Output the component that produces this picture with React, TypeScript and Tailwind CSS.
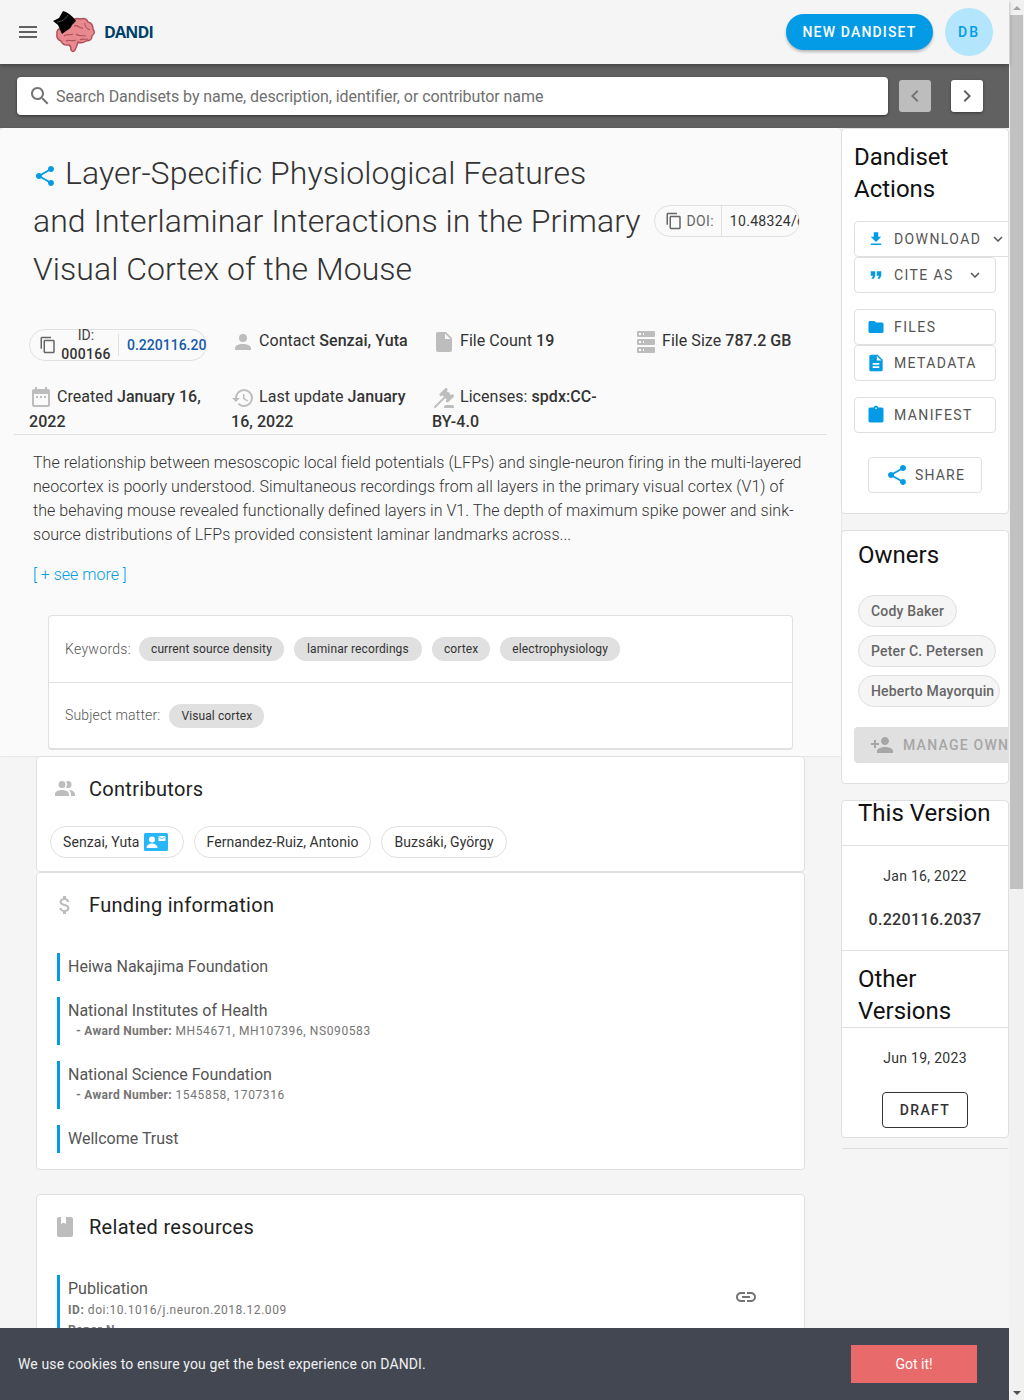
import React from "react";

const P = {
  menu: "M3 18h18v-2H3v2zm0-5h18v-2H3v2zm0-7v2h18V6H3z",
  search: "M15.5 14h-.79l-.28-.27C15.41 12.59 16 11.11 16 9.5 16 5.91 13.09 3 9.5 3S3 5.91 3 9.5 5.91 16 9.5 16c1.61 0 3.09-.59 4.23-1.57l.27.28v.79l5 4.99L20.49 19l-4.99-5zm-6 0C7.01 14 5 11.99 5 9.5S7.01 5 9.5 5 14 7.01 14 9.5 11.99 14 9.5 14z",
  left: "M15.41 7.41 14 6l-6 6 6 6 1.41-1.41L10.83 12z",
  right: "M10 6 8.59 7.41 13.17 12l-4.58 4.59L10 18l6-6z",
  share: "M18 16.08c-.76 0-1.44.3-1.96.77L8.91 12.7c.05-.23.09-.46.09-.7s-.04-.47-.09-.7l7.05-4.11c.54.5 1.25.81 2.04.81 1.66 0 3-1.34 3-3s-1.34-3-3-3-3 1.34-3 3c0 .24.04.47.09.7L8.04 9.81C7.5 9.31 6.79 9 6 9c-1.66 0-3 1.34-3 3s1.34 3 3 3c.79 0 1.5-.31 2.04-.81l7.12 4.16c-.05.21-.08.43-.08.65 0 1.61 1.31 2.92 2.92 2.92s2.92-1.31 2.92-2.92-1.31-2.92-2.92-2.92z",
  copy: "M16 1H4c-1.1 0-2 .9-2 2v14h2V3h12V1zm3 4H8c-1.1 0-2 .9-2 2v14c0 1.1.9 2 2 2h11c1.1 0 2-.9 2-2V7c0-1.1-.9-2-2-2zm0 16H8V7h11v14z",
  person: "M12,4A4,4 0 0,1 16,8A4,4 0 0,1 12,12A4,4 0 0,1 8,8A4,4 0 0,1 12,4M12,14C16.42,14 20,15.79 20,18V20H4V18C4,15.79 7.58,14 12,14Z",
  file: "M13,9V3.5L18.5,9M6,2C4.89,2 4,2.89 4,4V20A2,2 0 0,0 6,22H18A2,2 0 0,0 20,20V8L14,2H6Z",
  server: "M4,1H20A1,1 0 0,1 21,2V6A1,1 0 0,1 20,7H4A1,1 0 0,1 3,6V2A1,1 0 0,1 4,1M4,9H20A1,1 0 0,1 21,10V14A1,1 0 0,1 20,15H4A1,1 0 0,1 3,14V10A1,1 0 0,1 4,9M4,17H20A1,1 0 0,1 21,18V22A1,1 0 0,1 20,23H4A1,1 0 0,1 3,22V18A1,1 0 0,1 4,17M9,5H10V3H9V5M9,13H10V11H9V13M9,21H10V19H9V21M5,3V5H7V3H5M5,11V13H7V11H5M5,19V21H7V19H5Z",
  calendar: "M9,10H7V12H9V10M13,10H11V12H13V10M17,10H15V12H17V10M19,3H18V1H16V3H8V1H6V3H5C3.89,3 3,3.9 3,5V19A2,2 0 0,0 5,21H19A2,2 0 0,0 21,19V5A2,2 0 0,0 19,3M19,19H5V8H19V19Z",
  history: "M13.5,8H12V13L16.28,15.54L17,14.33L13.5,12.25V8M13,3A9,9 0 0,0 4,12H1L4.96,16.03L9,12H6A7,7 0 0,1 13,5A7,7 0 0,1 20,12A7,7 0 0,1 13,19C11.07,19 9.32,18.21 8.06,16.94L6.64,18.36C8.27,20 10.5,21 13,21A9,9 0 0,0 22,12A9,9 0 0,0 13,3",
  gavel: "M2.3,20.28L11.9,10.68L10.5,9.26L9.78,9.97C9.39,10.36 8.76,10.36 8.37,9.97L7.66,9.26C7.27,8.87 7.27,8.24 7.66,7.85L13.32,2.19C13.71,1.8 14.34,1.8 14.73,2.19L15.44,2.9C15.83,3.29 15.83,3.92 15.44,4.31L14.73,5L16.15,6.43C16.54,6.04 17.17,6.04 17.56,6.43C17.95,6.82 17.95,7.46 17.56,7.85L18.97,9.26L19.68,8.55C20.07,8.16 20.71,8.16 21.1,8.55L21.8,9.26C22.19,9.65 22.19,10.29 21.8,10.68L16.15,16.33C15.76,16.72 15.12,16.72 14.73,16.33L14.03,15.63C13.63,15.24 13.63,14.6 14.03,14.21L14.73,13.5L13.32,12.09L3.71,21.7C3.32,22.09 2.69,22.09 2.3,21.7C1.91,21.31 1.91,20.67 2.3,20.28M20,19A2,2 0 0,1 22,21V22H12V21A2,2 0 0,1 14,19H20Z",
  download: "M19 9h-4V3H9v6H5l7 7 7-7zM5 18v2h14v-2H5z",
  down: "M7.41 8.59 12 13.17l4.59-4.58L18 10l-6 6-6-6 1.41-1.41z",
  quote: "M6 17h3l2-4V7H5v6h3zm8 0h3l2-4V7h-6v6h3z",
  folder: "M10 4H4c-1.1 0-1.99.9-1.99 2L2 18c0 1.1.9 2 2 2h16c1.1 0 2-.9 2-2V8c0-1.1-.9-2-2-2h-8l-2-2z",
  description: "M14 2H6c-1.1 0-1.99.9-1.99 2L4 20c0 1.1.89 2 1.99 2H18c1.1 0 2-.9 2-2V8l-6-6zm2 16H8v-2h8v2zm0-4H8v-2h8v2zm-3-5V3.5L18.5 9H13z",
  clipboard: "M19 3h-4.18C14.4 1.84 13.3 1 12 1s-2.4.84-2.82 2H5c-1.1 0-2 .9-2 2v14c0 1.1.9 2 2 2h14c1.1 0 2-.9 2-2V5c0-1.1-.9-2-2-2zm-7 0c.55 0 1 .45 1 1s-.45 1-1 1-1-.45-1-1 .45-1 1-1z",
  personAdd: "M15 12c2.21 0 4-1.79 4-4s-1.79-4-4-4-4 1.79-4 4 1.79 4 4 4zm-9-2V7H4v3H1v2h3v3h2v-3h3v-2H6zm9 4c-2.67 0-8 1.34-8 4v2h16v-2c0-2.66-5.33-4-8-4z",
  group: "M16 17V19H2V17S2 13 9 13 16 17 16 17M12.5 7.5A3.5 3.5 0 1 0 9 11A3.5 3.5 0 0 0 12.5 7.5M15.94 13A5.32 5.32 0 0 1 18 17V19H22V17S22 13.37 15.94 13M15 4A3.39 3.39 0 0 0 13.07 4.59A5 5 0 0 1 13.07 10.41A3.39 3.39 0 0 0 15 11A3.5 3.5 0 0 0 15 4Z",
  money: "M11.8 10.9c-2.27-.59-3-1.2-3-2.15 0-1.09 1.01-1.85 2.7-1.85 1.78 0 2.44.85 2.5 2.1h2.21c-.07-1.72-1.12-3.3-3.21-3.81V3h-3v2.16c-1.94.42-3.5 1.68-3.5 3.61 0 2.31 1.91 3.46 4.7 4.13 2.5.6 3 1.48 3 2.41 0 .69-.49 1.79-2.7 1.79-2.06 0-2.87-.92-2.98-2.1h-2.2c.12 2.19 1.76 3.42 3.68 3.83V21h3v-2.15c1.95-.37 3.5-1.5 3.5-3.55 0-2.84-2.43-3.81-4.7-4.4z",
  book: "M18 2h-5v7l-2.5-1.5L8 9V2H6c-1.1 0-2 .9-2 2v16c0 1.1.9 2 2 2h12c1.1 0 2-.9 2-2V4c0-1.1-.9-2-2-2z",
  link: "M3.9 12c0-1.71 1.39-3.1 3.1-3.1h4V7H7c-2.76 0-5 2.24-5 5s2.24 5 5 5h4v-1.9H7c-1.71 0-3.1-1.39-3.1-3.1zM8 13h8v-2H8v2zm9-6h-4v1.9h4c1.71 0 3.1 1.39 3.1 3.1s-1.39 3.1-3.1 3.1h-4V17h4c2.76 0 5-2.24 5-5s-2.24-5-5-5z",
};

function Icon({ d, className }: { d: string; className: string }) {
  return (
    <svg viewBox="0 0 24 24" className={className} fill="currentColor">
      <path d={d} />
    </svg>
  );
}

function Logo() {
  return (
    <svg viewBox="0 0 44 44" className="w-[44px] h-[44px] shrink-0">
      <path d="M10 18 q2-7 9-6 q4-5 9-3 q6-2 8 3 q5 1 5 7 q3 4-1 7 q0 5-6 5 q-4 3-8 1 q-1 4-3 8 q-2 3-4 0 q0-4-2-5 q-6 1-8-4 q-5-2-4-7 q-1-5 5-6z" fill="#e8898f" stroke="#ae4f5a" strokeWidth="1.4" />
      <path d="M12 26 C15 23 18 26 21 24 M22 16 C26 14 27 19 31 18 M24 24 C27 27 31 25 34 26 M33 13 C32 17 36 19 38 20 M14 31 C17 29 20 32 24 30 M28 30 C30 28 34 30 36 29" fill="none" stroke="#ae4f5a" strokeWidth="1.1" />
      <path d="M1 11 L7 8 L11 1 C15 2 21 6 24 11 L20 15 C19 18 17 19 14 21 L10 24 C8 20 7 17 6 15 Z" fill="#000" />
      <path d="M5 12 C9 12 14 9 16 5" fill="none" stroke="#666" strokeWidth="0.8" />
    </svg>
  );
}

function ActionBtn({ icon, label, chevron, w = "w-[142px]", iconCls = "w-5 h-5" }: { icon: string; label: string; chevron?: string; w?: string; iconCls?: string }) {
  return (
    <div className={`${w} h-[36px] shrink-0 flex items-center border border-[#e0e0e0] rounded-[4px] pl-[11px] text-[14px] tracking-[1.4px] text-[#555]`}>
      <span className="w-[20px] flex justify-center text-[#039be5]"><Icon d={icon} className={iconCls} /></span>
      <span className="ml-[8px] whitespace-nowrap">{label}</span>
      {chevron ? <span className={chevron}><Icon d={P.down} className="w-[18px] h-[18px] text-[#555]" /></span> : null}
    </div>
  );
}

function OwnerChip({ name, w = "w-fit" }: { name: string; w?: string }) {
  return (
    <div className={`h-[32px] ${w} flex items-center rounded-full border border-[#e0e0e0] bg-[#f5f5f5] px-[12px] text-[14px] font-medium tracking-[0.18px] text-[#666] whitespace-nowrap`}>{name}</div>
  );
}

function Tag({ label, w = "" }: { label: string; w?: string }) {
  return (
    <span className={`h-[24px] ${w} flex items-center justify-center rounded-full bg-[#e0e0e0] px-[12px] text-[12px] tracking-[0.11px] text-[#333] whitespace-nowrap`}>{label}</span>
  );
}

function SectionTitle({ icon, label }: { icon: string; label: string }) {
  return (
    <div className="flex items-center h-[32px]">
      <span className="w-[24px] flex justify-center text-[#bdbdbd] ml-[16px]"><Icon d={icon} className="w-6 h-6" /></span>
      <span className="ml-[12px] text-[20px] tracking-[0.3px] text-[#222]">{label}</span>
    </div>
  );
}

function Fund({ name, award }: { name: string; award?: string }) {
  return (
    <div className="ml-[20px] border-l-[3px] border-[#039be5] pl-[8px] mb-[16px]">
      <div className="text-[16px] leading-[28px] text-[#555]">{name}</div>
      {award ? (
        <div className="-mt-[2px] text-[12px] leading-[16px] pb-[6px] pl-[8px] tracking-[0.6px] text-[#757575]">
          <span className="font-bold tracking-[0.3px]">- Award Number:</span> {award}
        </div>
      ) : null}
    </div>
  );
}

function Meta({ icon, children, pr = "pr-[4px]", pt = "" }: { icon: string; children: React.ReactNode; pr?: string; pt?: string }) {
  return (
    <div className={`text-[16px] leading-[24px] tracking-[0.05px] text-[#333] ${pr} ${pt}`}>
      <Icon d={icon} className="inline-block w-6 h-6 text-[#bdbdbd] align-middle mr-[4px]" />
      {children}
    </div>
  );
}

export default function App() {
  return (
    <div className="relative w-[1024px] h-[1400px] overflow-hidden flex bg-[#f5f5f5] [font-family:Roboto,sans-serif]">
      <div className="w-[1009px] shrink-0 flex flex-col">
        <header className="h-[64px] shrink-0 bg-[#f5f5f5] flex items-center pl-[16px] pr-[16px] z-10 shadow-[0_2px_4px_rgba(0,0,0,0.3)]">
          <Icon d={P.menu} className="w-6 h-6 text-[#616161]" />
          <span className="ml-[12px]"><Logo /></span>
          <span className="ml-[8px] text-[16px] font-bold tracking-[-0.8px] text-[#003f6b] [font-family:'Open_Sans',sans-serif]">DANDI</span>
          <div className="ml-auto h-[36px] w-[147px] rounded-full bg-[#039be5] text-white text-[14px] font-medium tracking-[1.17px] flex items-center justify-center shadow-[0_2px_3px_rgba(0,0,0,0.25)]">NEW DANDISET</div>
          <div className="ml-[12px] w-[48px] h-[48px] rounded-full bg-[#b3e5fc] text-[#039be5] text-[14px] font-medium tracking-[2px] flex items-center justify-center">DB</div>
        </header>

        <div className="h-[64px] shrink-0 bg-[#616161] flex items-center pl-[17px]">
          <div className="w-[871px] h-[38px] bg-white rounded-[4px] flex items-center pl-[11px] shadow-[0_1px_3px_rgba(0,0,0,0.5)]">
            <Icon d={P.search} className="w-6 h-6 text-[#757575]" />
            <span className="ml-[4px] pt-[1px] text-[16px] tracking-[-0.07px] text-[#6f6f6f]">Search Dandisets by name, description, identifier, or contributor name</span>
          </div>
          <div className="ml-[11px] w-[32px] h-[32px] rounded-[3px] bg-[#bdbdbd] flex items-center justify-center"><Icon d={P.left} className="w-6 h-6 text-[#757575]" /></div>
          <div className="ml-[20px] w-[32px] h-[32px] rounded-[3px] bg-white flex items-center justify-center shadow-[0_1px_3px_rgba(0,0,0,0.4)]"><Icon d={P.right} className="w-6 h-6 text-[#616161]" /></div>
        </div>

        <div className="flex-1 flex min-h-0">
          <div className="w-[841px] shrink-0 flex flex-col">
            <section className="h-[628px] shrink-0 bg-[#fafafa] rounded-t-[4px] pt-[21px] shadow-[0_0_2px_rgba(0,0,0,0.2)]">
              <h1 className="pl-[33px] w-[800px] text-[32px] leading-[48px] font-light tracking-[0.05px] text-[#333] whitespace-nowrap">
                <Icon d={P.share} className="inline-block w-6 h-6 text-[#039be5] align-middle mr-[8px]" />
                Layer-Specific Physiological Features<br />
                and Interlaminar Interactions in the Primary
                <span className="inline-flex align-[2px] ml-[13px] w-[146px] h-[32px] rounded-full border border-[#e0e0e0] overflow-hidden items-center text-[14px] font-normal tracking-normal leading-none">
                  <Icon d={P.copy} className="w-[18px] h-[18px] ml-[10px] text-[#666] shrink-0" />
                  <span className="ml-[4px] text-[#666] tracking-[0.3px]">DOI:</span>
                  <span className="ml-[7px] h-full border-l border-[#e0e0e0] pl-[8px] flex items-center whitespace-nowrap text-[#333] tracking-[0.3px]">10.48324/dandi.000166/0.220116.2037</span>
                </span>
                <br />Visual Cortex of the Mouse
              </h1>

              <div className="mx-[14px] mt-[35px] pl-[15px] h-[107px] border-b border-[#e0e0e0] grid grid-cols-[202px_201px_202px_1fr] grid-rows-[57px_49px]">
                <div className="pt-[1px]">
                  <div className="w-[178px] h-[32px] rounded-full border border-[#e0e0e0] flex items-center text-[14px]">
                    <Icon d={P.copy} className="w-[18px] h-[18px] ml-[9px] text-[#666] shrink-0" />
                    <span className="w-[58px] text-center leading-[19px] text-[#444] shrink-0">ID:<br /><b className="font-medium text-[#333] tracking-[0.3px]">000166</b></span>
                    <span className="ml-[3px] w-[89px] h-[22px] overflow-hidden flex items-center border-l border-[#e0e0e0] pl-[8px] font-medium text-[#1559a8] whitespace-nowrap">0.220116.2037</span>
                  </div>
                </div>
                <Meta icon={P.person} pt="pt-[1px]">Contact <b className="font-medium">Senzai, Yuta</b></Meta>
                <Meta icon={P.file} pt="pt-[1px]">File Count <b className="font-medium">19</b></Meta>
                <Meta icon={P.server} pt="pt-[1px]">File Size <b className="font-medium">787.2 GB</b></Meta>
                <Meta icon={P.calendar}>Created <b className="font-medium">January 16, 2022</b></Meta>
                <Meta icon={P.history}>Last update <b className="font-medium">January 16, 2022</b></Meta>
                <Meta icon={P.gavel} pr="pr-[20px]">Licenses: <b className="font-medium">spdx:CC-BY-4.0</b></Meta>
              </div>

              <p className="ml-[33px] mt-[16px] w-[775px] text-[16px] leading-[24px] tracking-[0.05px] font-light text-[#333]">
                The relationship between mesoscopic local field potentials (LFPs) and single-neuron firing in the multi-layered neocortex is poorly understood. Simultaneous recordings from all layers in the primary visual cortex (V1) of the behaving mouse revealed functionally defined layers in V1. The depth of maximum spike power and sink-source distributions of LFPs provided consistent laminar landmarks across...
              </p>
              <div className="ml-[33px] mt-[16px] text-[16px] leading-[24px] font-light text-[#039be5]">[ + see more ]</div>

              <div className="ml-[48px] mt-[28px] w-[745px] h-[135px] bg-white rounded-[4px] border border-[#e0e0e0] border-b-2 flex flex-col">
                <div className="h-[67px] shrink-0 border-b border-[#e0e0e0] flex items-center pl-[16px]">
                  <span className="text-[14px] font-light tracking-[0.3px] text-[#555] mr-[8px]">Keywords:</span>
                  <div className="flex gap-[10px]">
                    <Tag label="current source density" />
                    <Tag label="laminar recordings" w="w-[128px]" />
                    <Tag label="cortex" />
                    <Tag label="electrophysiology" />
                  </div>
                </div>
                <div className="flex-1 flex items-center pl-[16px]">
                  <span className="text-[14px] font-light tracking-[0.15px] text-[#555] mr-[9px]">Subject matter:</span>
                  <Tag label="Visual cortex" />
                </div>
              </div>
            </section>

            <section className="ml-[36px] w-[769px] h-[116px] shrink-0 bg-white border border-[#e0e0e0] rounded-[4px] pt-[16px]">
              <SectionTitle icon={P.group} label="Contributors" />
              <div className="flex gap-[10px] ml-[13px] mt-[21px] text-[14px] text-[#333]">
                <span className="h-[32px] flex items-center rounded-full border border-[#e0e0e0] pl-[12px] pr-[15px] tracking-[0.07px]">
                  Senzai, Yuta
                  <svg viewBox="0 0 24 18" className="ml-[4px] w-[24px] h-[18px]">
                    <rect width="24" height="18" rx="1.5" fill="#29b6f6" />
                    <circle cx="8" cy="6.5" r="3" fill="#fff" />
                    <path d="M2.5 15c0-3 3-4.5 5.5-4.5s5.5 1.5 5.5 4.5z" fill="#fff" />
                    <rect x="14.5" y="3" width="7" height="5" fill="#fff" />
                    <path d="M14.5 3.5l3.5 2.5 3.5-2.5" fill="none" stroke="#29b6f6" strokeWidth="0.8" />
                  </svg>
                </span>
                <span className="h-[32px] flex items-center rounded-full border border-[#e0e0e0] px-[12px] tracking-[0.07px]">Fernandez-Ruiz, Antonio</span>
                <span className="h-[32px] flex items-center rounded-full border border-[#e0e0e0] px-[12px] tracking-[0.07px]">Buzsáki, György</span>
              </div>
            </section>

            <section className="ml-[36px] w-[769px] h-[298px] shrink-0 bg-white border border-[#e0e0e0] rounded-[4px] pt-[16px]">
              <SectionTitle icon={P.money} label="Funding information" />
              <div className="mt-[32px]">
                <Fund name="Heiwa Nakajima Foundation" />
                <Fund name="National Institutes of Health" award="MH54671, MH107396, NS090583" />
                <Fund name="National Science Foundation" award="1545858, 1707316" />
                <Fund name="Wellcome Trust" />
              </div>
            </section>

            <section className="ml-[36px] mt-[24px] w-[769px] flex-1 bg-white border border-[#e0e0e0] rounded-[4px] pt-[16px]">
              <SectionTitle icon={P.book} label="Related resources" />
              <div className="mt-[32px] mr-[46px] flex items-start justify-between">
                <div className="ml-[20px] border-l-[3px] border-[#039be5] pl-[8px] w-[500px]">
                  <div className="text-[16px] leading-[28px] text-[#555]">Publication</div>
                  <div className="-mt-[1px] text-[12px] leading-[16px] tracking-[0.55px] text-[#757575]"><b className="font-bold">ID:</b> doi:10.1016/j.neuron.2018.12.009</div>
                  <div className="text-[12px] leading-[24px] tracking-[0.55px] text-[#757575]"><b className="font-bold">Paper N</b></div>
                </div>
                <Icon d={P.link} className="w-6 h-6 mt-[10px] text-[#757575]" />
              </div>
            </section>
          </div>

          <aside className="w-[168px] shrink-0 flex flex-col">
            <section className="h-[386px] shrink-0 bg-white border border-[#e0e0e0] rounded-[4px] overflow-hidden pl-[12px] pt-[12px]">
              <h2 className="text-[24px] leading-[32px] text-[#111] w-[130px]">Dandiset Actions</h2>
              <div className="mt-[16px] flex flex-col">
                <ActionBtn icon={P.download} label="DOWNLOAD" chevron="ml-[8px]" w="w-[160px]" iconCls="w-[18px] h-[18px]" />
                <ActionBtn icon={P.quote} label="CITE AS" chevron="ml-[12px]" iconCls="w-[18px] h-[18px]" />
                <div className="h-[16px]" />
                <ActionBtn icon={P.folder} label="FILES" iconCls="w-[18px] h-[18px]" />
                <ActionBtn icon={P.description} label="METADATA" />
                <div className="h-[16px]" />
                <ActionBtn icon={P.clipboard} label="MANIFEST" />
                <div className="ml-[14px] mt-[24px] w-[114px] h-[36px] border border-[#e0e0e0] rounded-[4px] flex items-center justify-center text-[14px] tracking-[1.2px] text-[#555]">
                  <Icon d={P.share} className="w-6 h-6 text-[#039be5] mr-[6px]" />SHARE
                </div>
              </div>
            </section>

            <section className="mt-[16px] h-[254px] shrink-0 bg-white border border-[#e0e0e0] rounded-[4px] overflow-hidden pt-[8px]">
              <h2 className="pl-[16px] text-[24px] leading-[32px] text-[#111]">Owners</h2>
              <div className="pl-[16px] mt-[24px] flex flex-col gap-[8px]">
                <OwnerChip name="Cody Baker" />
                <OwnerChip name="Peter C. Petersen" />
                <OwnerChip name="Heberto Mayorquin" w="w-[142px]" />
              </div>
              <div className="ml-[12px] mt-[20px] w-[180px] h-[36px] rounded-[4px] bg-[#e0e0e0] flex items-center pl-[16px] text-[14px] font-medium tracking-[1.25px] text-[#a6a6a6] whitespace-nowrap">
                <Icon d={P.personAdd} className="w-6 h-6 text-[#a6a6a6] mr-[9px] shrink-0" />MANAGE OWNERS
              </div>
            </section>

            <section className="mt-[16px] h-[338px] shrink-0 bg-white border border-[#e0e0e0] rounded-[4px] overflow-hidden">
              <h2 className="-mt-[4px] pl-[16px] h-[49px] text-[24px] leading-[32px] text-[#111] border-b border-[#e0e0e0]">This Version</h2>
              <div className="h-[105px] border-b border-[#e0e0e0] flex flex-col items-center">
                <div className="mt-[20px] text-[14px] leading-[20px] tracking-[0.3px] text-[#333]">Jan 16, 2022</div>
                <div className="mt-[24px] text-[16px] leading-[20px] font-medium tracking-[0.3px] text-[#333]">0.220116.2037</div>
              </div>
              <h2 className="pl-[16px] pt-[12px] h-[77px] text-[24px] leading-[32px] text-[#111] border-b border-[#e0e0e0] w-full">Other<br />Versions</h2>
              <div className="flex flex-col items-center">
                <div className="mt-[20px] text-[14px] leading-[20px] tracking-[0.3px] text-[#333]">Jun 19, 2023</div>
                <div className="mt-[24px] w-[86px] h-[36px] border border-[#333] rounded-[4px] flex items-center justify-center text-[14px] font-medium tracking-[1.4px] text-[#333]">DRAFT</div>
              </div>
            </section>
            <div className="mt-[10px] mx-px border-t border-[#dcdcdc]" />
          </aside>
        </div>
      </div>

      <div className="w-[15px] shrink-0 bg-[#f1f1f1] flex flex-col items-center">
        <div className="h-[15px] flex items-center justify-center shrink-0">
          <span className="w-0 h-0 border-x-[4px] border-x-transparent border-b-[4px] border-b-[#a3a3a3]" />
        </div>
        <div className="w-[13px] h-[874px] shrink-0 bg-[#c1c1c1]" />
        <div className="mt-auto h-[15px] flex items-center justify-center shrink-0">
          <span className="w-0 h-0 border-x-[4px] border-x-transparent border-t-[4px] border-t-[#505050]" />
        </div>
      </div>

      <div className="absolute left-0 bottom-0 w-[1009px] h-[72px] bg-[#424752] flex items-center pl-[18px] z-20">
        <span className="text-[14px] tracking-[0.12px] text-[#f0f0f0]">We use cookies to ensure you get the best experience on DANDI.</span>
        <span className="ml-auto mr-[32px] w-[126px] h-[38px] bg-[#e86a6a] text-white text-[14px] flex items-center justify-center">Got it!</span>
      </div>
    </div>
  );
}
